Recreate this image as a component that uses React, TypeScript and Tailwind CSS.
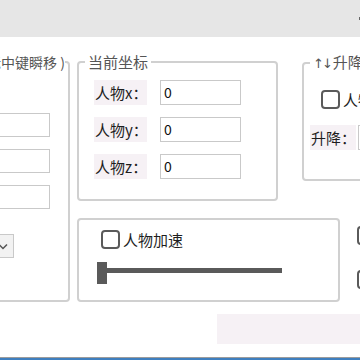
import React from "react";

const font = "font-['Noto_Sans_CJK_SC','Microsoft_YaHei',sans-serif]";

function Box({ className }: { className: string }) {
  return <span className={`block shrink-0 w-[19px] h-[19px] rounded-[4px] border-2 border-[#5a5a5a] bg-white ${className}`} />;
}

function Label({ text, w }: { text: string; w: string }) {
  return (
    <span className={`shrink-0 ${w} h-[25px] bg-[#f6f1f5] pl-[1px] text-[15px] leading-[25px] text-[#1e1e1e] whitespace-nowrap`}>
      {text}
    </span>
  );
}

function Field({ value }: { value?: string }) {
  return (
    <div className="shrink-0 w-[81px] h-[25px] border border-[#c9c9c9] bg-white pl-[3px] text-[14px] leading-[23px] text-[#111]">
      {value}
    </div>
  );
}

export default function App() {
  const coords = ["人物x：", "人物y：", "人物z："];
  return (
    <div className={`w-[360px] h-[360px] overflow-hidden bg-white flex flex-col ${font}`}>
      <div className="relative h-[37px] shrink-0 bg-[#e6e6e6]">
        <span className="absolute right-0 top-[17px] w-[1px] h-[3px] bg-[#666]" />
      </div>

      <div className="flex pt-[15px] shrink-0">
        {/* left group, mostly off-screen */}
        <fieldset className="shrink-0 -ml-[210px] w-[280px] h-[250px] border-2 border-[#d0d0d0] rounded-[4px]">
          <legend className="ml-[167px] px-0 text-[14px] leading-[20px] text-[#555] whitespace-nowrap">（鼠标中键瞬移 )</legend>
          <div className="flex flex-col items-end pt-[41px] pr-[18px] gap-[12px]">
            <div className="w-[100px] h-[24px] border border-[#c9c9c9]" />
            <div className="w-[100px] h-[24px] border border-[#c9c9c9]" />
            <div className="w-[100px] h-[24px] border border-[#c9c9c9]" />
            <div className="mt-[13px] mr-[36px] w-[60px] h-[24px] border border-[#c9c9c9] bg-[#f2f2f2] flex items-center justify-end pr-[5px]">
              <svg width="10" height="7" viewBox="0 0 10 7">
                <path d="M1 1.5 L5 5.5 L9 1.5" fill="none" stroke="#555" strokeWidth="1.5" />
              </svg>
            </div>
          </div>
        </fieldset>

        <div className="ml-[7px] flex flex-col shrink-0">
          <div className="flex">
            <fieldset className="shrink-0 w-[201px] h-[149px] border-2 border-[#d0d0d0] rounded-[4px]">
              <legend className="ml-[6px] px-[3px] text-[15px] leading-[20px] text-[#555]">当前坐标</legend>
              <div className="flex flex-col gap-[12px] pt-[8px] pl-[15px]">
                {coords.map((c) => (
                  <div key={c} className="flex items-center gap-[13px]">
                    <Label text={c} w="w-[53px]" />
                    <Field value="0" />
                  </div>
                ))}
              </div>
            </fieldset>

            <fieldset className="shrink-0 ml-[24px] w-[140px] h-[129px] border-2 border-[#d0d0d0] rounded-[4px]">
              <legend className="ml-[6px] px-[3px] text-[15px] leading-[20px] text-[#555] whitespace-nowrap">
                <span className="font-['DejaVu_Sans',sans-serif] text-[13px] tracking-[-2px] mr-[2px]">↑↓</span>升降
              </legend>
              <div className="flex flex-col pt-[16px]">
                <div className="flex items-center gap-[3px] pl-[17px]">
                  <Box className="" />
                  <span className="text-[15px] leading-[19px] text-[#1e1e1e] whitespace-nowrap">人物升降</span>
                </div>
                <div className="flex items-center gap-[2px] pl-[6px] mt-[16px]">
                  <Label text="升降：" w="w-[46px]" />
                  <Field />
                </div>
              </div>
            </fieldset>
          </div>

          <div className="flex mt-[17px]">
            <div className="shrink-0 w-[263px] h-[84px] border-2 border-[#d0d0d0] rounded-[4px] pt-[10px] pl-[18px]">
              <div className="flex items-center gap-[3px] pl-[4px]">
                <Box className="" />
                <span className="text-[15px] leading-[19px] text-[#1e1e1e]">人物加速</span>
              </div>
              <div className="flex items-start mt-[13px]">
                <span className="w-[10px] h-[22px] bg-[#5a5a5a]" />
                <span className="mt-[6px] w-[175px] h-[5px] bg-[#5a5a5a]" />
              </div>
            </div>
            <div className="flex flex-col ml-[17px] pt-[8px] gap-[25px]">
              <Box className="" />
              <Box className="" />
            </div>
          </div>
        </div>
      </div>

      <div className="shrink-0 mt-[12px] ml-[217px] w-[143px] h-[30px] bg-[#f6f1f5]" />

      <div className="mt-auto shrink-0">
        <div className="h-[1px] bg-[#9c9c9c]" />
        <div className="h-[2px] bg-[#3f7fbf]" />
      </div>
    </div>
  );
}
